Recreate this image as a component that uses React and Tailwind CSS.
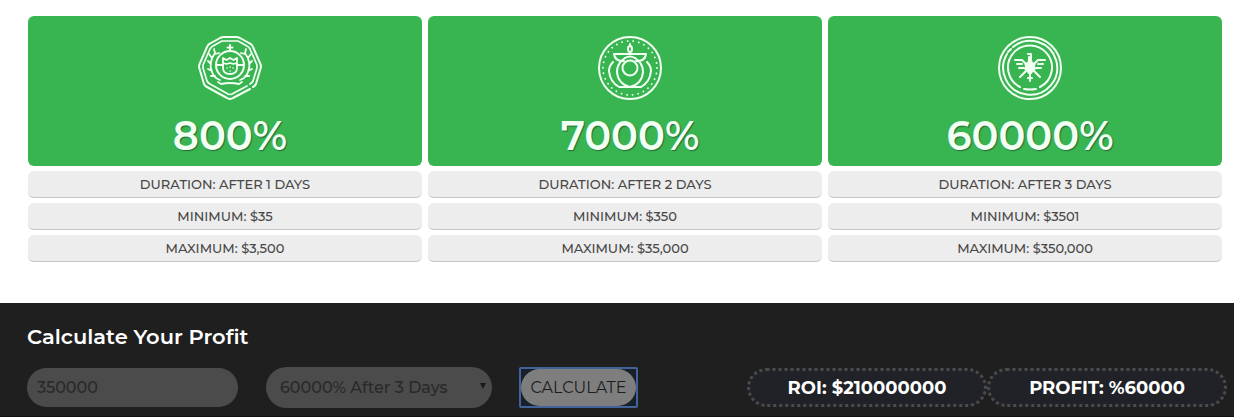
import React, { useState } from "react";

const CrestIcon = () => (
  <svg viewBox="0 0 64 64" className="h-16 w-16" fill="none" stroke="currentColor" strokeWidth="2" strokeLinecap="round" strokeLinejoin="round" aria-hidden="true">
    <path d="M52 53 L35 62 Q32 64 29 62 L9 51 Q7 50 6 48 L1 31 Q1 29 2 27 L9 11 Q10 8 13 7 L22 2 Q24 1 26 1 L38 1 Q40 1 42 2 L51 7 Q54 8 55 11 L62 27 Q63 29 63 31 L58 48 Q57 50 55 51" />
    <path d="M49 50 L34 58 Q32 59 30 58 L12 48 Q10 47 9 45 L5 32 Q5 30 5 29 L12 13 Q13 11 15 10 L24 5 Q26 5 27 5 L37 5 Q39 5 40 5 L49 10 Q51 11 52 13 L59 29 Q59 30 59 32 L55 45 Q54 47 52 48" strokeWidth="1.7" />
    <circle cx="32" cy="29" r="14" />
    <path d="M32 9v6M29.500 11.500h5M18 29h7M39 29h7" />
    <path d="M25 22v10q0 6 7 6t7-6V22l-3.500 2-3.500-2-3.500 2zM25 27l3.500 1 3.500-1 3.500 1 3.500-1" strokeWidth="1.8" />
    <path d="M29 32h.1M32 31h.1M35 32h.1M32 35h.1" strokeWidth="1.5" />
    <path d="M17 17Q10 27 14 36Q16 42 22 44M47 17Q54 27 50 36Q48 42 42 44M17 17l-1-4M14 22l-3-4M13 28l-3-3M14 35l-4-2M17 40l-4 0M47 17l1-4M50 22l3-4M51 28l3-3M50 35l4-2M47 40l4 0M17 18l4-1M47 18l-4-1M20 46l3 2q9-2 18 0l3-2" strokeWidth="1.8" />
  </svg>
);

const OrbIcon = () => (
  <svg viewBox="0 0 64 64" className="h-16 w-16" fill="none" stroke="currentColor" strokeWidth="2" strokeLinecap="round" strokeLinejoin="round" aria-hidden="true">
    <circle cx="32" cy="32" r="31" />
    <circle cx="32" cy="32" r="27" strokeDasharray="0.1 5.55" strokeWidth="1.8" />
    <circle cx="32" cy="32" r="7.500" />
    <path d="M27 22Q19 27 19 36Q20 48 32 51Q44 48 45 36Q45 27 37 22" />
    <path d="M16 18h32M16 18q1 7 8 7h2M48 18q-1 7-8 7h-2M32 8v2M32 16v2M27 22q5-3 10 0" />
    <ellipse cx="32" cy="13" rx="2" ry="3" />
    <path d="M15 26Q11 30 11 35Q12 46 21 51H43Q52 46 53 35Q53 30 49 26" />
  </svg>
);

const EagleIcon = () => (
  <svg viewBox="0 0 64 64" className="h-16 w-16" fill="none" stroke="currentColor" strokeWidth="2" strokeLinecap="round" strokeLinejoin="round" aria-hidden="true">
    <circle cx="32" cy="32" r="31" />
    <path d="M15 11 A27 27 0 1 1 9 18M10 16l3-3" />
    <path d="M22 51 A22 22 0 1 1 42 51M26 53q6 1 12 0" />
    <path d="M30 18h3v4M31 21v4M17 24h7l4 4M19 28h5M21 32h5l3 2M47 24h-7l-4 4M45 28h-5M43 32h-5l-3 2M28 35l-6 6M36 35l6 6M32 36v9M30 42h4" />
    <path d="M31 22h2l1 4 3 2-1 6-3 4h-2l-3-4-1-6 3-2z" fill="currentColor" strokeWidth="1" />
  </svg>
);

const plans = [
  { percent: "800%", icon: <CrestIcon />, details: ["DURATION: AFTER 1 DAYS", "MINIMUM: $35", "MAXIMUM: $3,500"] },
  { percent: "7000%", icon: <OrbIcon />, details: ["DURATION: AFTER 2 DAYS", "MINIMUM: $350", "MAXIMUM: $35,000"] },
  { percent: "60000%", icon: <EagleIcon />, details: ["DURATION: AFTER 3 DAYS", "MINIMUM: $3501", "MAXIMUM: $350,000"] },
];

const PlanCard = ({ plan }) => (
  <div className="flex flex-col gap-[5px]">
    <div className="flex flex-col items-center rounded-md bg-[#38b451] pt-5 pb-2 pl-2.5 text-[#f2fff3]">
      {plan.icon}
      <h2 className="mt-3.5 text-[40px] leading-[44px] font-semibold [text-shadow:1px_1px_1px_#27693a]">
        {plan.percent}
      </h2>
    </div>
    {plan.details.map((detail) => (
      <p key={detail} className="rounded-md border-b border-[#c6c6c6] bg-[#ededed] text-center text-[13px] leading-[26px] font-medium text-[#484848]">
        {detail}
      </p>
    ))}
  </div>
);

const App = () => {
  const [amount, setAmount] = useState("350000");
  const [rate, setRate] = useState("60000");
  const [result, setResult] = useState({ roi: 210000000, profit: 60000 });

  const handleCalculate = (e) => {
    e.preventDefault();
    setResult({ roi: (Number(amount) * Number(rate)) / 100, profit: rate });
  };

  return (
    <div className="bg-white font-[Montserrat,Inter,sans-serif]">
      {/* Plans */}
      <div className="grid grid-cols-3 gap-1.5 pt-4 pr-3 pb-[41px] pl-7">
        {plans.map((plan) => (
          <PlanCard key={plan.percent} plan={plan} />
        ))}
      </div>

      {/* Calculator */}
      <div className="border-b border-[#150f10] bg-[#1f1f1f] pt-5 pr-[7px] pb-2 pl-[27px]">
        <h2 className="text-[21px] leading-7 font-semibold text-white">Calculate Your Profit</h2>
        <form onSubmit={handleCalculate} className="mt-4 flex items-center">
          <input
            type="text"
            aria-label="Amount"
            value={amount}
            onChange={(e) => setAmount(e.target.value)}
            className="h-[39px] w-[211px] rounded-full bg-[#4b4b4b] px-2.5 text-base font-medium text-[#292929] outline-none"
          />
          <div className="relative ml-7">
            <select
              aria-label="Plan"
              value={rate}
              onChange={(e) => setRate(e.target.value)}
              className="h-[41px] w-[226px] appearance-none rounded-full bg-[#4b4b4b] px-3.5 text-base font-medium text-[#292929] outline-none"
            >
              <option value="800">800% After 1 Days</option>
              <option value="7000">7000% After 2 Days</option>
              <option value="60000">60000% After 3 Days</option>
            </select>
            <svg viewBox="0 0 6 6" className="pointer-events-none absolute top-4 right-1.5 h-1.5 w-1.5" aria-hidden="true">
              <path d="M0 0h6L3 6z" fill="#191919" />
            </svg>
          </div>
          <button type="submit" className="ml-[27px] h-[41px] w-[119px] rounded-xs border-2 border-[#41639a] bg-[#17202b]">
            <span className="flex h-full items-center justify-center rounded-full bg-[#7e7e7e] text-base text-[#1c1c1c]">
              CALCULATE
            </span>
          </button>
          <div className="ml-auto flex text-lg font-bold text-white">
            <output className="flex h-[39px] w-60 items-center justify-center rounded-full border-3 border-dotted border-[#4b4b4b] bg-[#202227]">
              ROI: ${result.roi}
            </output>
            <output className="flex h-[39px] w-60 items-center justify-center rounded-full border-3 border-dotted border-[#4b4b4b] bg-[#202227]">
              PROFIT: %{result.profit}
            </output>
          </div>
        </form>
      </div>
    </div>
  );
};

export default App;
